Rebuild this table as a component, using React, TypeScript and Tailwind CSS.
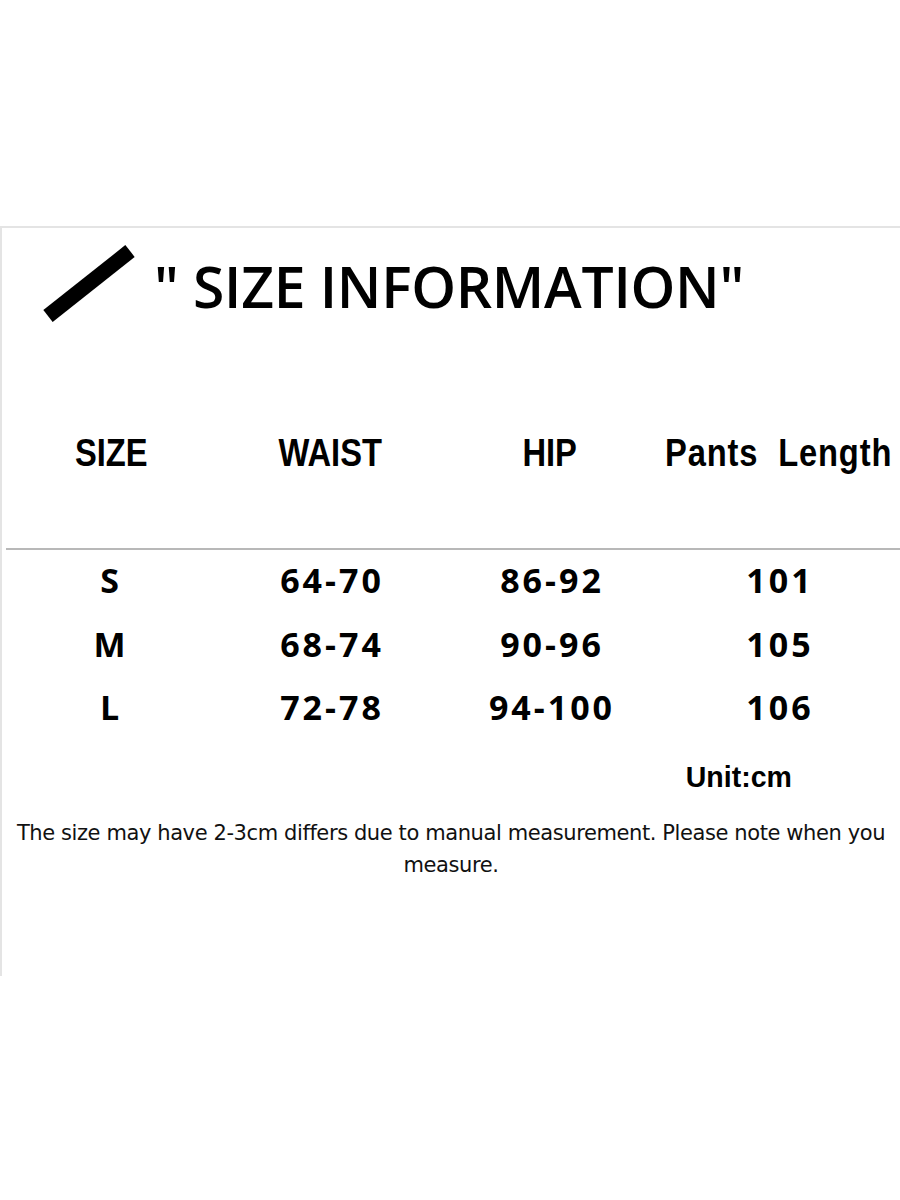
import React from 'react';

const rows = [
  { size: 'S', waist: '64-70', hip: '86-92', length: '101' },
  { size: 'M', waist: '68-74', hip: '90-96', length: '105' },
  { size: 'L', waist: '72-78', hip: '94-100', length: '106' },
];

export default function App() {
  return (
    <div className="w-[900px] h-[1200px] bg-white overflow-hidden">
      <div className="h-[226px]" />
      <div className="h-[750px] border-t-2 border-l-2 border-[#e4e4e4] flex flex-col">
        {/* title */}
        <div className="flex items-center h-[118px] pl-[38px]">
          <svg width="96" height="82" viewBox="0 0 96 82" className="shrink-0 -mt-[6px]">
            <line x1="8" y1="73" x2="90" y2="8" stroke="#000" strokeWidth="15" />
          </svg>
          <h1 className="ml-[18px] text-[57px] font-semibold text-black tracking-[-0.3px] font-['Open_Sans',sans-serif] whitespace-pre">
            " SIZE INFORMATION"
          </h1>
        </div>

        {/* header row */}
        <div className="grid grid-cols-[218px_220px_220px_1fr] items-center h-[202px] pt-[12px] text-[38px] font-bold text-black font-['Liberation_Sans',Arial,sans-serif]">
          <div className="text-center">
            <span className="inline-block scale-x-[0.86]">SIZE</span>
          </div>
          <div className="text-center">
            <span className="inline-block scale-x-[0.86]">WAIST</span>
          </div>
          <div className="text-center">
            <span className="inline-block scale-x-[0.86]">HIP</span>
          </div>
          <div className="text-left whitespace-pre overflow-visible">
            <span className="inline-block origin-left scale-x-[0.86] ml-[5px] tracking-[1px]">Pants  Length</span>
          </div>
        </div>

        <div className="h-[2px] bg-[#b8b8b8] ml-[4px]" />

        {/* data rows */}
        <div className="-mt-[1px]">
          {rows.map((r) => (
            <div
              key={r.size}
              className="grid grid-cols-[218px_224px_216px_1fr] items-center h-[63.5px] text-[34px] font-bold text-black tracking-[3px] font-['Open_Sans',sans-serif]"
            >
              <div className="text-center">{r.size}</div>
              <div className="text-center">{r.waist}</div>
              <div className="text-center">{r.hip}</div>
              <div className="text-center">{r.length}</div>
            </div>
          ))}
        </div>

        <div className="flex justify-end pr-[105px] mt-[14px]">
          <span className="inline-block scale-x-[0.95] text-[30px] font-bold text-black font-['Liberation_Sans',Arial,sans-serif]">
            Unit:cm
          </span>
        </div>

        <p className="mt-[18px] px-[4px] text-center text-[21px] leading-[32px] text-[#111] font-['DejaVu_Sans',sans-serif] tracking-[-0.4px]">
          The size may have 2-3cm differs due to manual measurement. Please note when you
          <br />
          measure.
        </p>
      </div>
    </div>
  );
}
